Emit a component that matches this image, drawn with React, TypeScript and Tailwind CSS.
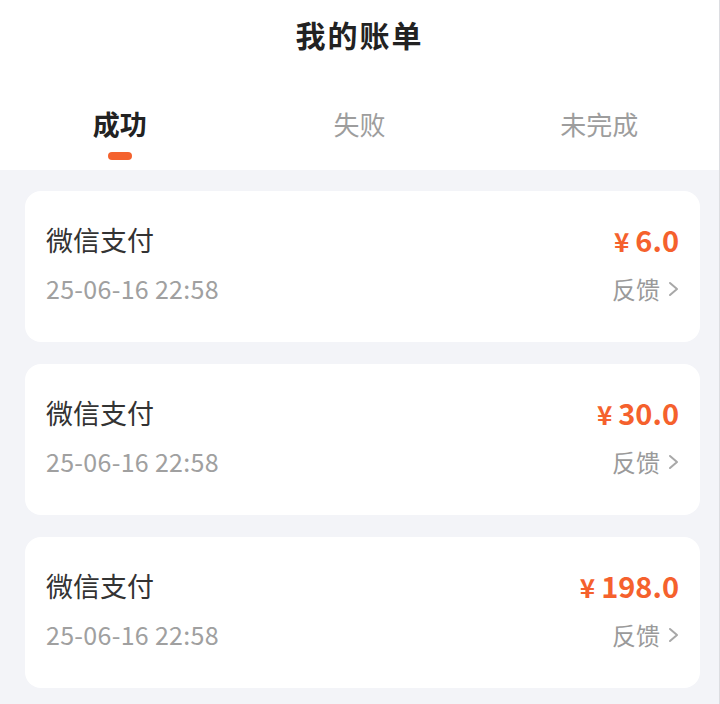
import React from "react";

const items = [
  { name: "微信支付", time: "25-06-16 22:58", amount: "6.0" },
  { name: "微信支付", time: "25-06-16 22:58", amount: "30.0" },
  { name: "微信支付", time: "25-06-16 22:58", amount: "198.0" },
];

const tabs = ["成功", "失败", "未完成"];

export default function App() {
  return (
    <div
      className="w-[720px] h-[704px] overflow-hidden bg-[#f3f4f8] border-r border-[#dcdde1]"
      style={{ fontFamily: '"Noto Sans CJK SC", "Noto Sans", sans-serif' }}
    >
      <div className="bg-white h-[170px] flex flex-col">
        <div className="h-[68px] flex items-center justify-center text-[30px] font-bold text-[#222] tracking-[2px]">
          我的账单
        </div>
        <div className="grid grid-cols-3 mt-[38px]">
          {tabs.map((t, i) => (
            <div key={t} className="flex flex-col items-center">
              <div
                className={
                  i === 0
                    ? "h-[36px] leading-[36px] text-[27px] font-bold text-[#222]"
                    : "h-[36px] leading-[36px] text-[26px] text-[#9d9d9d]"
                }
              >
                {t}
              </div>
              <div
                className={
                  i === 0
                    ? "mt-[10px] w-[24px] h-[8px] rounded-full bg-[#f4622e]"
                    : "mt-[10px] w-[24px] h-[8px]"
                }
              />
            </div>
          ))}
        </div>
      </div>
      <div className="flex flex-col gap-[22px] pt-[21px] pl-[25px] pr-[19px]">
        {items.map((it, i) => (
          <div
            key={i}
            className="bg-white rounded-[16px] h-[151px] pl-[21px] pr-[21px] flex flex-col justify-center gap-[14px] pb-[4px]"
          >
            <div className="flex items-center justify-between h-[35px]">
              <span className="text-[27px] text-[#333]">{it.name}</span>
              <span className="flex items-center text-[29px] font-bold text-[#f5612d]">
                <span className="mr-[6px] text-[26px]">¥</span>
                {it.amount}
              </span>
            </div>
            <div className="flex items-center justify-between h-[35px]">
              <span className="text-[25px] text-[#a0a0a0] tracking-[0.3px]">{it.time}</span>
              <span className="flex items-center gap-[8px] text-[24px] text-[#9a9a9a]">
                反馈
                <svg width="11" height="16" viewBox="0 0 11 16" fill="none">
                  <path d="M2 2 L9 8 L2 14" stroke="#a8a8a8" strokeWidth="2" strokeLinecap="round" strokeLinejoin="round" />
                </svg>
              </span>
            </div>
          </div>
        ))}
      </div>
    </div>
  );
}
